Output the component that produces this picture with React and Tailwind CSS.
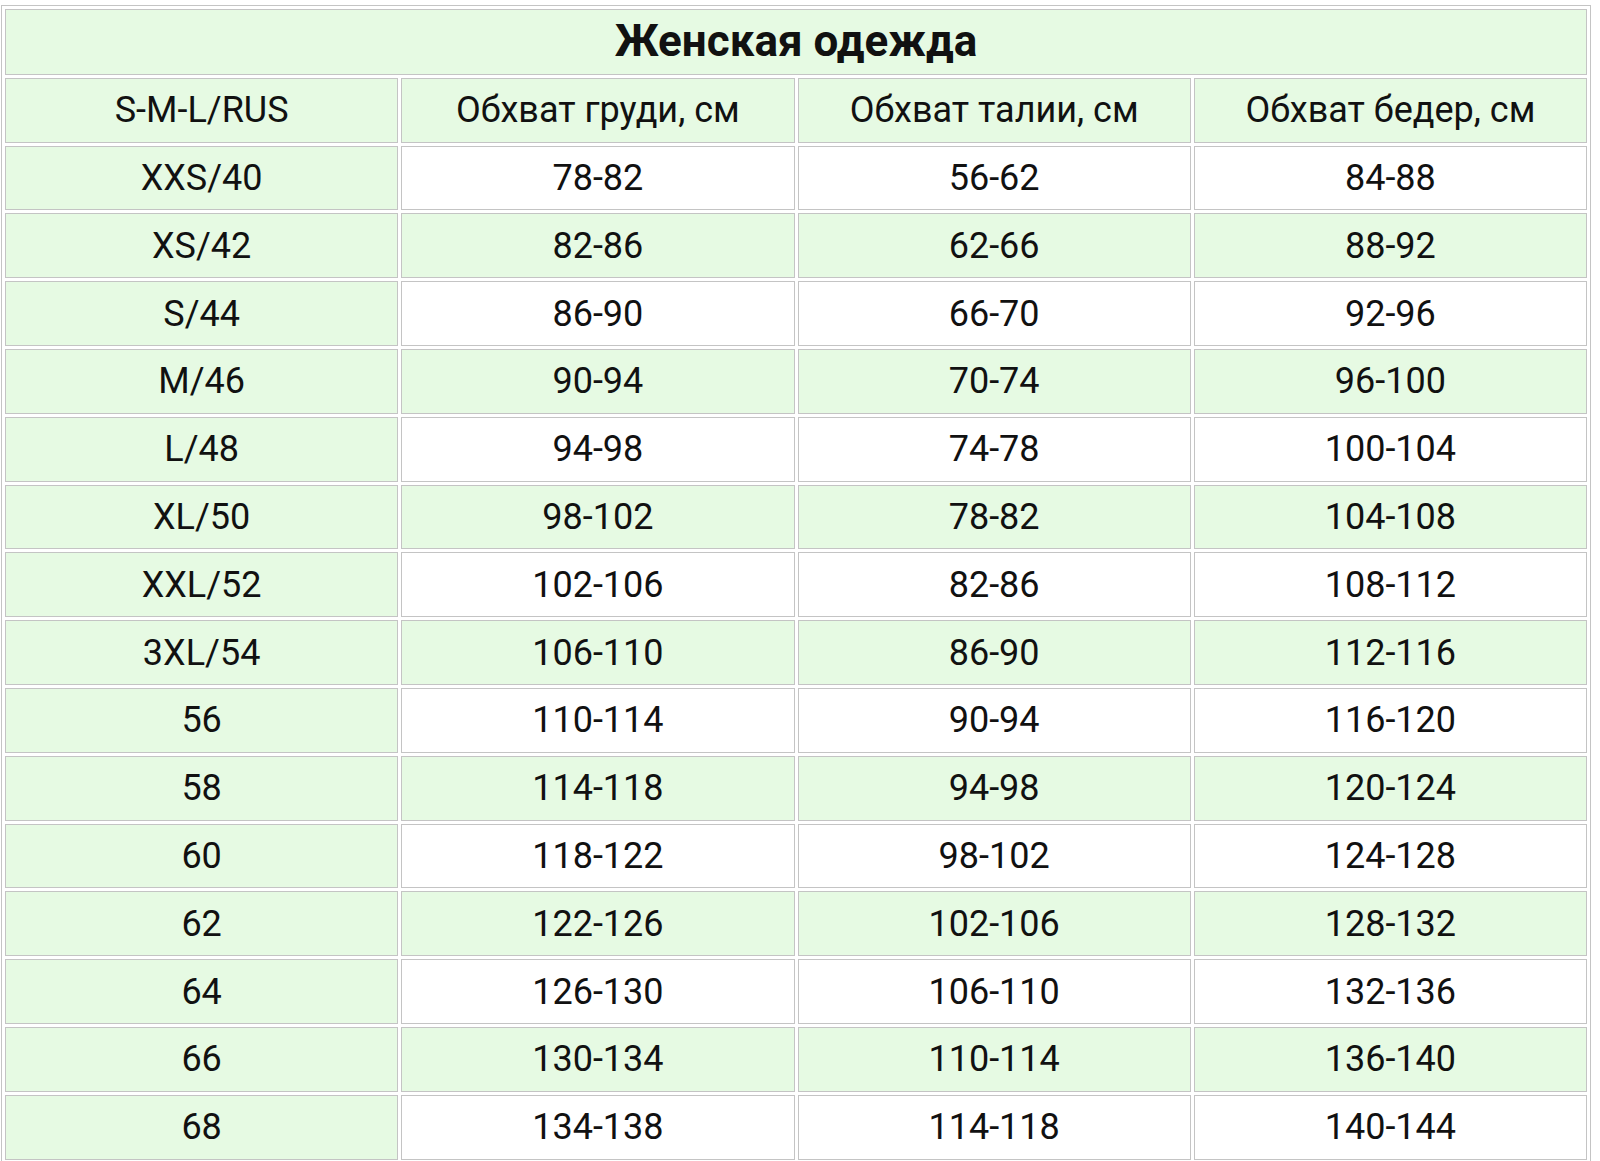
export default function App() {
  const rows = [
    ["XXS/40", "78-82", "56-62", "84-88"],
    ["XS/42", "82-86", "62-66", "88-92"],
    ["S/44", "86-90", "66-70", "92-96"],
    ["M/46", "90-94", "70-74", "96-100"],
    ["L/48", "94-98", "74-78", "100-104"],
    ["XL/50", "98-102", "78-82", "104-108"],
    ["XXL/52", "102-106", "82-86", "108-112"],
    ["3XL/54", "106-110", "86-90", "112-116"],
    ["56", "110-114", "90-94", "116-120"],
    ["58", "114-118", "94-98", "120-124"],
    ["60", "118-122", "98-102", "124-128"],
    ["62", "122-126", "102-106", "128-132"],
    ["64", "126-130", "106-110", "132-136"],
    ["66", "130-134", "110-114", "136-140"],
    ["68", "134-138", "114-118", "140-144"],
  ];
  const cell = "border border-[#c4c4c4] text-center align-middle p-0";
  const green = "bg-[#e6fae3]";
  return (
    <div className="w-[1600px] h-[1161px] bg-white pt-[5px] pl-[1px]" style={{ fontFamily: "Roboto, 'Liberation Sans', sans-serif" }}>
      <table className="table-fixed w-[1590px] border-separate border-spacing-[3px] border border-[#c4c4c4] text-[#111] text-[36px] leading-none">
        <tbody>
          <tr className="h-[66px]">
            <td colSpan={4} className={`${cell} ${green} font-bold text-[44px] pb-[2px]`}>Женская одежда</td>
          </tr>
          <tr className="h-[64.7px]">
            <td className={`${cell} ${green}`}>S-M-L/RUS</td>
            <td className={`${cell} ${green}`}>Обхват груди, см</td>
            <td className={`${cell} ${green}`}>Обхват талии, см</td>
            <td className={`${cell} ${green}`}>Обхват бедер, см</td>
          </tr>
          {rows.map((r, i) => {
            const bg = i % 2 === 0 ? "bg-white" : green;
            return (
              <tr key={i} className="h-[64.8px]">
                <td className={`${cell} ${green}`}>{r[0]}</td>
                <td className={`${cell} ${bg}`}>{r[1]}</td>
                <td className={`${cell} ${bg}`}>{r[2]}</td>
                <td className={`${cell} ${bg}`}>{r[3]}</td>
              </tr>
            );
          })}
        </tbody>
      </table>
    </div>
  );
}
